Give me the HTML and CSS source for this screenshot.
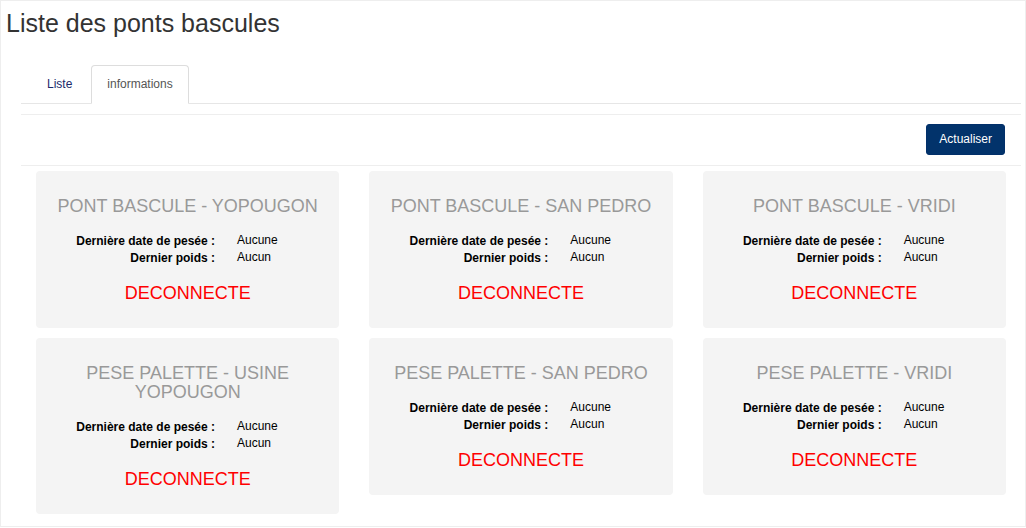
FILE: index.html
```html
<!DOCTYPE html>
<html lang="fr">
<head>
<meta charset="utf-8">
<title>Liste des ponts bascules</title>
<link rel="stylesheet" href="styles.css">
</head>
<body>
<div class="page">
  <h3 class="page-title">Liste des ponts bascules</h3>
  <div class="content">
    <ul class="tabs">
      <li class="tab"><a>Liste</a></li>
      <li class="tab active"><a>informations</a></li>
    </ul>
    <div class="toolbar">
      <button class="btn">Actualiser</button>
    </div>
    <div class="grid">
      <div class="col"><div class="card">
        <h4 class="card-title">PONT BASCULE - YOPOUGON</h4>
        <div class="info"><span class="lbl">Dernière date de pesée :</span><span class="val">Aucune</span><span class="lbl">Dernier poids :</span><span class="val">Aucun</span></div>
        <div class="status">DECONNECTE</div>
      </div></div>
      <div class="col"><div class="card">
        <h4 class="card-title">PONT BASCULE - SAN PEDRO</h4>
        <div class="info"><span class="lbl">Dernière date de pesée :</span><span class="val">Aucune</span><span class="lbl">Dernier poids :</span><span class="val">Aucun</span></div>
        <div class="status">DECONNECTE</div>
      </div></div>
      <div class="col"><div class="card">
        <h4 class="card-title">PONT BASCULE - VRIDI</h4>
        <div class="info"><span class="lbl">Dernière date de pesée :</span><span class="val">Aucune</span><span class="lbl">Dernier poids :</span><span class="val">Aucun</span></div>
        <div class="status">DECONNECTE</div>
      </div></div>
      <div class="col"><div class="card">
        <h4 class="card-title">PESE PALETTE - USINE YOPOUGON</h4>
        <div class="info"><span class="lbl">Dernière date de pesée :</span><span class="val">Aucune</span><span class="lbl">Dernier poids :</span><span class="val">Aucun</span></div>
        <div class="status">DECONNECTE</div>
      </div></div>
      <div class="col"><div class="card">
        <h4 class="card-title">PESE PALETTE - SAN PEDRO</h4>
        <div class="info"><span class="lbl">Dernière date de pesée :</span><span class="val">Aucune</span><span class="lbl">Dernier poids :</span><span class="val">Aucun</span></div>
        <div class="status">DECONNECTE</div>
      </div></div>
      <div class="col"><div class="card">
        <h4 class="card-title">PESE PALETTE - VRIDI</h4>
        <div class="info"><span class="lbl">Dernière date de pesée :</span><span class="val">Aucune</span><span class="lbl">Dernier poids :</span><span class="val">Aucun</span></div>
        <div class="status">DECONNECTE</div>
      </div></div>
    </div>
  </div>
</div>
</body>
</html>
```
FILE: styles.css
```css
* { box-sizing: border-box; }
html, body { margin: 0; padding: 0; background: #fff; }
body {
  font-family: "Liberation Sans", Arial, sans-serif;
  font-size: 12px;
  line-height: 17px;
  color: #333;
}
.page {
  width: 1026px;
  height: 527px;
  border: 1px solid #eee;
  overflow: hidden;
}
.page-title {
  margin: 6px 0 0 5px;
  font-size: 25px;
  line-height: 32px;
  font-weight: normal;
  color: #333;
}
.content {
  margin: 0 4px 0 20px;
}
.tabs {
  list-style: none;
  margin: 26px 0 0 0;
  padding: 0 0 0 10px;
  display: flex;
  border-bottom: 1px solid #e6e6e6;
}
.tab {
  margin: 0 3px -1px 0;
}
.tab a {
  display: block;
  padding: 10px 15px;
  border: 1px solid transparent;
  border-radius: 4px 4px 0 0;
  color: #1b2a6b;
  line-height: 17px;
}
.tab.active a {
  color: #555;
  background: #fff;
  border-color: #ddd #ddd transparent #ddd;
}
.toolbar {
  margin-top: 10px;
  border-top: 1px solid #eee;
  border-bottom: 1px solid #eee;
  padding: 9px 16px 10px 0;
  display: flex;
  justify-content: flex-end;
}
.btn {
  font-family: "Liberation Sans", Arial, sans-serif;
  font-size: 12px;
  line-height: 17px;
  padding: 6px 12px;
  border: 1px solid #02306a;
  border-radius: 3px;
  background: #02336b;
  color: #fff;
  cursor: pointer;
}
.grid {
  display: grid;
  grid-template-columns: repeat(3, 1fr);
  align-items: start;
  row-gap: 10px;
  margin-top: 5px;
}
.col {
  padding: 0 15px;
}
.card {
  background: #f4f4f4;
  border-radius: 4px;
  padding: 26px 15px 25px;
}
.card-title {
  margin: 0 0 17px;
  font-size: 18px;
  line-height: 19px;
  font-weight: normal;
  text-align: center;
  color: #999;
}
.info {
  display: grid;
  grid-template-columns: 164px 1fr;
  column-gap: 22px;
}
.lbl {
  text-align: right;
  font-weight: bold;
  color: #000;
}
.val {
  color: #000;
  position: relative;
  top: -1px;
}
.status {
  margin-top: 16px;
  text-align: center;
  font-size: 18px;
  line-height: 20px;
  color: #f00;
}
```
